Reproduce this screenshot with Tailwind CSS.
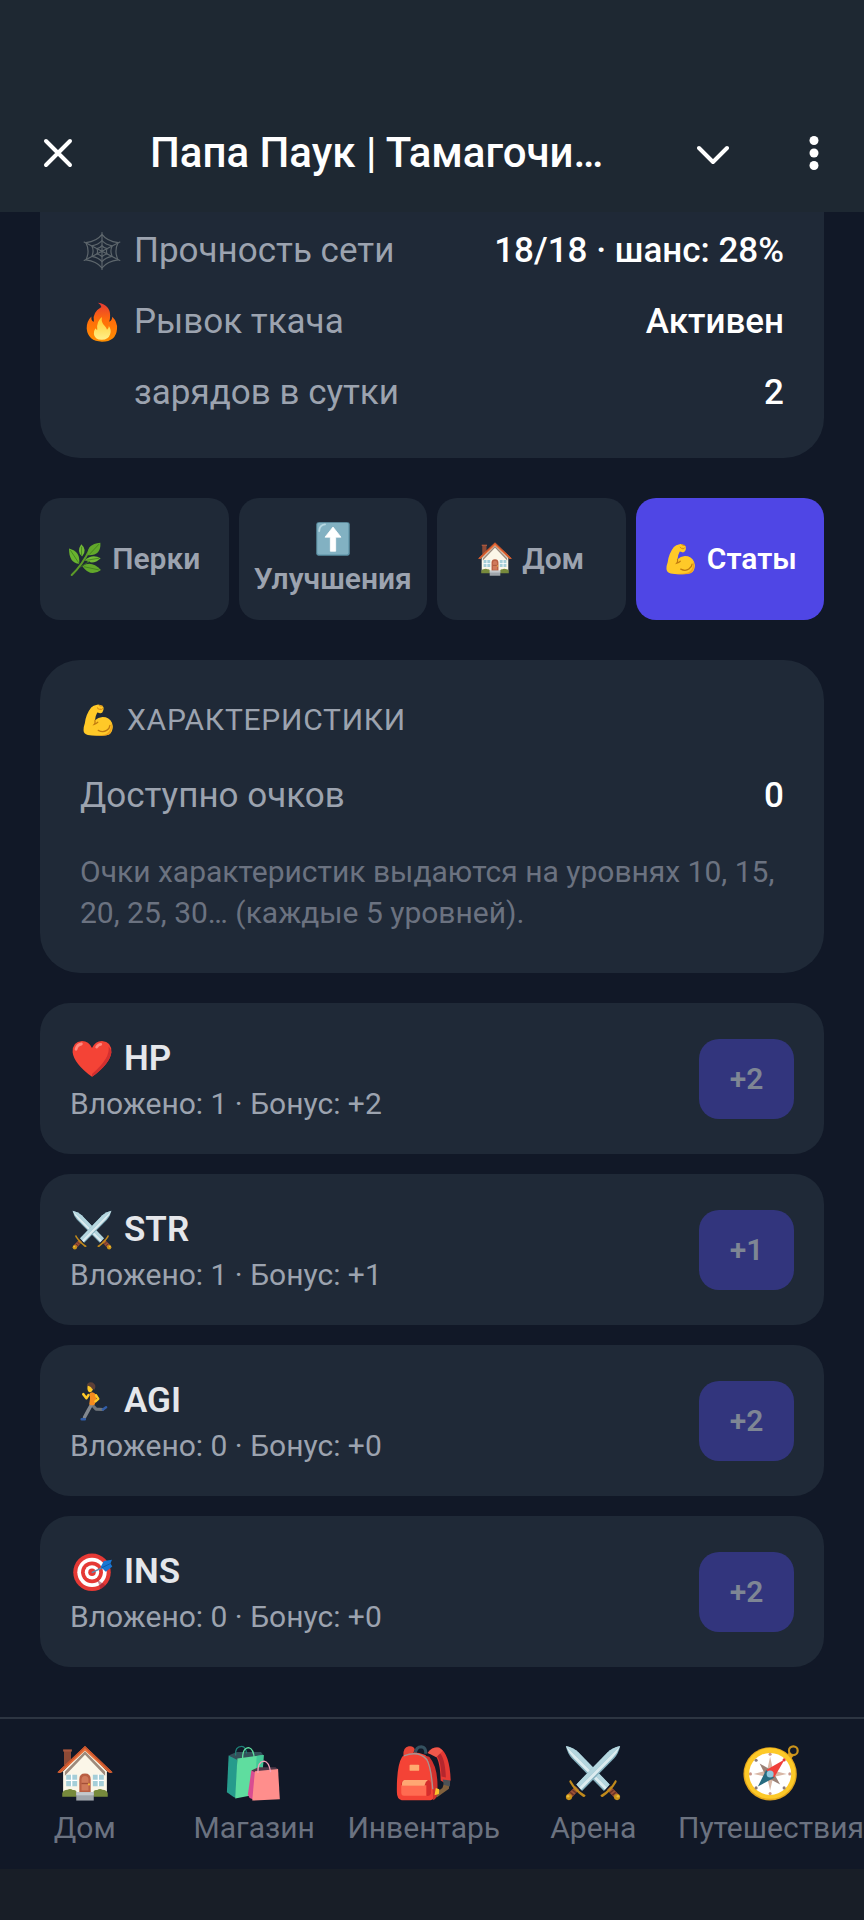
<!DOCTYPE html>
<html lang="ru">
<head>
<meta charset="utf-8">
<meta name="viewport" content="width=device-width, initial-scale=1">
<title>Папа Паук | Тамагочи</title>
<script src="https://cdn.jsdelivr.net/npm/@tailwindcss/browser@4"></script>
</head>
<body class="flex min-h-screen flex-col bg-[#111827] font-['Roboto',sans-serif] text-gray-200">

<svg class="hidden" aria-hidden="true">
  <symbol id="house" viewBox="0 0 128 128">
    <path d="M16 12h16v34H16z" fill="#8d4a36"/><path d="M14 10h20v5H14z" fill="#a8563d"/>
    <path d="M64 8 14 60v50h100V60z" fill="#fbf6e8"/>
    <path d="M64 14 18 61v9l46-48 46 48v-9z" fill="#9c8a7c"/>
    <path d="M64 2 1 62q4 3 9 1L64 13l54 50q5 2 9-1z" fill="#e8703a"/>
    <path d="M64 2 1 62l5 1L64 7l58 56 5-1z" fill="#c9542c"/>
    <path d="M21 68h25v26H21zM82 68h25v26H82z" fill="#a5ced8"/>
    <path d="M33.500 67v28M20 81h27M94.500 67v28M81 81h27" stroke="#fff" stroke-width="3"/>
    <path d="M51 108V78q0-13 13-13t13 13v30z" fill="#b95f43"/>
    <path d="M56 104V80q0-9 8-9t8 9v24z" fill="#d07a5b"/><path d="M56 88h16" stroke="#a34f37" stroke-width="3"/>
    <circle cx="73" cy="90" r="2.500" fill="#f4b93c"/>
    <path d="M12 118v-8q2-8 12-8 7-3 12 1 8-2 9 6v9zM83 118v-9q1-8 9-6 5-4 12-1 10 0 12 8v8z" fill="#778a3c"/>
    <path d="M44 108h40v19H44z" fill="#9fa5ab"/><path d="M44 108h40v7H44z" fill="#c3c8cc"/>
  </symbol>
  <symbol id="biceps" viewBox="-10 -4 138 134">
    <path d="M54 4q7-4 15 0 14 4 14 12 1 10-5 17-5 5-12 2l-8-2q-8 14-9 31 12-12 30-13 27 0 37 23 9 24-6 42-8 7-28 8-38 3-61-2-17-5-17-19 0-14 5-27 4-35 25-62Q44 5 54 4z" fill="#ffc928"/>
    <path d="M49 64q2 10-3 16 8-2 14-8M62 104q18 10 33 0 12-8 13-20" fill="none" stroke="#c07a10" stroke-width="5" stroke-linecap="round"/>
    <path d="M59 15q3 8 12 5M66 5q5 4 12 3M71 22q6 0 8-5" fill="none" stroke="#d98a14" stroke-width="4" stroke-linecap="round"/>
    <path d="M111 70q14 28-6 50-11 5-30 5-20 1-35-1 44 0 56-8 20-14 15-46z" fill="#f2a31c"/>
  </symbol>
  <symbol id="swords" viewBox="0 0 128 128">
    <g id="sword">
      <path d="M2 2q18 4 29 15l71 73-13 15L16 31Q5 18 2 2z" fill="#86b2c0"/>
      <path d="M2 2q18 4 29 15l71 73-6 7z" fill="#b4d6df"/>
      <path d="m2 2 94 95-5 5L20 30Q8 18 2 2z" fill="#dcecf0"/>
      <path d="m96 102 8-8 19 19-9 9z" fill="#9b5037"/>
      <path d="m103 109 8-6M108 115l8-7" stroke="#693225" stroke-width="3"/>
      <path d="M115 80q5 2 2 6-11 19-30 32-5 2-6-3 22-13 34-35z" fill="#c18a1b"/>
      <circle cx="119" cy="119" r="7" fill="#c99218"/><circle cx="121" cy="117" r="3" fill="#eabd3d"/>
    </g>
    <use href="#sword" transform="translate(128 0) scale(-1 1)"/>
  </symbol>
</svg>

<header class="bg-[#1e2832] pt-[94px]">
  <div class="flex h-[118px] items-center px-10">
    <button type="button" aria-label="Закрыть" class="shrink-0">
      <svg class="h-9 w-9" viewBox="0 0 36 36" fill="none" stroke="#fff" stroke-width="4" stroke-linecap="round"><path d="M6 6l24 24M30 6L6 30"/></svg>
    </button>
    <h1 class="ml-[74px] min-w-0 flex-1 truncate text-[42px] leading-[60px] font-medium text-white">Папа Паук | Тамагочи…</h1>
    <button type="button" aria-label="Свернуть" class="shrink-0">
      <svg class="h-8 w-8" viewBox="0 0 32 32" fill="none" stroke="#fff" stroke-width="4" stroke-linecap="round" stroke-linejoin="round"><path d="M2 11l14 14 14-14"/></svg>
    </button>
    <button type="button" aria-label="Меню" class="ml-[75px] shrink-0">
      <svg class="h-9 w-5" viewBox="0 0 20 36" fill="#fff"><circle cx="10" cy="5.500" r="4.500"/><circle cx="10" cy="18" r="4.500"/><circle cx="10" cy="30.500" r="4.500"/></svg>
    </button>
  </div>
</header>

<main class="flex-1 px-10 pb-[50px]">
  <section class="flex flex-col gap-5 rounded-b-[40px] bg-[#1f2937] px-10 pt-[13px] pb-10 text-[35px] leading-[51px]">
    <div class="flex items-center justify-between">
      <span class="flex items-center gap-[10px] text-[#9ca3af]">
        <svg class="h-[38px] w-[44px]" viewBox="0 0 128 128" fill="none" stroke="#5d666c" stroke-width="4" stroke-linejoin="round" stroke-linecap="round">
          <path d="M64 2v124M4 34l120 62M124 34 4 96"/>
          <path d="M64 8Q81 31 118 36 104 64 118 94 83 98 64 121 45 98 10 94 24 64 10 36 47 31 64 8z"/>
          <path d="M64 29q12 13 34 18-8 17 0 35-22 4-34 18-12-14-34-18 8-18 0-35 22-5 34-18z"/>
          <path d="M64 46q6 8 17 10-4 9 0 18-11 2-17 9-6-7-17-9 4-9 0-18 11-2 17-10z"/>
        </svg>Прочность сети</span>
      <span class="font-medium text-white">18/18 · шанс: 28%</span>
    </div>
    <div class="flex items-center justify-between">
      <span class="flex items-center gap-[10px] text-[#9ca3af]">
        <svg class="h-10 w-[44px]" viewBox="0 0 128 128">
          <defs><linearGradient id="flame" x1="0" y1="0" x2="0" y2="1"><stop offset="0" stop-color="#e53935"/><stop offset=".45" stop-color="#ff6d0a"/><stop offset="1" stop-color="#ff8f00"/></linearGradient>
          <linearGradient id="core" x1="0" y1="0" x2="0" y2="1"><stop offset="0" stop-color="#ffc928"/><stop offset="1" stop-color="#fff08a"/></linearGradient></defs>
          <path d="M51 2q39 6 39 41 0 11-3 20 9-3 10-16 17 17 15 39-3 40-48 41-45-1-49-42-1-23 15-39-1 16 8 17Q31 34 62 16 61 7 51 2z" fill="url(#flame)"/>
          <path d="M64 48q-4 17 9 29 6 7 7 12 6-5 6-12 9 12 4 26-5 17-27 18-23-1-25-19-1-9 5-18 2 5 6 5-4-27 15-41z" fill="url(#core)"/>
        </svg>Рывок ткача</span>
      <span class="font-medium text-white">Активен</span>
    </div>
    <div class="flex items-center justify-between">
      <span class="pl-[54px] text-[#9ca3af]">зарядов в сутки</span>
      <span class="font-medium text-white">2</span>
    </div>
  </section>

  <div class="mt-10 grid grid-cols-4 gap-[10px] text-[30px] leading-10 font-semibold text-[#9ca3af]">
    <button type="button" class="flex h-[122px] items-center justify-center gap-[10px] rounded-[20px] bg-[#1f2937]">
      <svg class="h-10 w-[34px]" viewBox="0 0 128 128">
        <path d="M14 124Q54 87 84 24" fill="none" stroke="#5c9a28" stroke-width="8" stroke-linecap="round"/>
        <path d="M76 50Q68 8 122 3q3 49-46 47z" fill="#62a82b"/>
        <path d="M53 55Q31 35 50 8q24 21 3 47z" fill="#72b936"/>
        <path d="M42 82Q3 78 4 24q44 11 38 58z" fill="#69b32f"/>
        <path d="M63 69q28-26 60-8-27 27-60 8z" fill="#72b936"/>
        <path d="M54 91q34-23 70 14-39 30-70-14z" fill="#62a82b"/>
        <path d="M80 47 117 8M51 51V18M40 78 9 31M68 69l49-8M60 93l56 12M43 96l40-24" fill="none" stroke="#3d7f1c" stroke-width="3"/>
      </svg>Перки</button>
    <button type="button" class="flex h-[122px] flex-col items-center justify-center rounded-[20px] bg-[#1f2937]">
      <svg class="h-10 w-[34px]" viewBox="0 0 128 128"><rect x="1" y="1" width="126" height="126" rx="8" fill="#5d93a7"/><rect x="5" y="3" width="117" height="119" rx="7" fill="#82b1c2"/><path d="M12 34Q13 12 34 9" fill="none" stroke="#b7d8e2" stroke-width="7" stroke-linecap="round"/><path d="M64 19 94 57H74v53H54V57H34z" fill="#fff" stroke="#fff" stroke-width="3" stroke-linejoin="round"/></svg>
      <span>Улучшения</span></button>
    <button type="button" class="flex h-[122px] items-center justify-center gap-[10px] rounded-[20px] bg-[#1f2937]">
      <svg class="h-10 w-[34px]"><use href="#house"/></svg>Дом</button>
    <button type="button" class="flex h-[122px] items-center justify-center gap-[10px] rounded-[20px] bg-[#4f46e5] text-white">
      <svg class="h-10 w-[34px]"><use href="#biceps"/></svg>Статы</button>
  </div>

  <section class="mt-10 rounded-[40px] bg-[#1f2937] p-10">
    <h2 class="flex items-center gap-3 text-[30px] leading-10 tracking-wide text-[#9ca3af]"><svg class="h-10 w-[35px]"><use href="#biceps"/></svg>ХАРАКТЕРИСТИКИ</h2>
    <div class="mt-[30px] flex items-center justify-between text-[35px] leading-[51px]">
      <span class="text-[#9ca3af]">Доступно очков</span><span class="font-medium text-white">0</span>
    </div>
    <p class="mt-[30px] text-[30px] leading-[41px] text-[#6b7280]">Очки характеристик выдаются на уровнях 10, 15, 20, 25, 30… (каждые 5 уровней).</p>
  </section>

  <ul class="mt-[30px] flex flex-col gap-5">
    <li class="flex items-center justify-between rounded-[30px] bg-[#1f2937] p-[30px]">
      <div>
        <h3 class="flex items-center gap-[10px] text-[35px] leading-[51px] font-semibold text-gray-200">
          <svg class="h-10 w-[44px]" viewBox="0 0 128 128"><path d="M64 121Q6 78 2 42 1 8 32 6q22 0 32 23Q74 6 96 6q31 2 30 36-4 36-62 79z" fill="#f44336"/><path d="M117 24q7 36-53 88v9q58-43 62-79 0-9-9-18z" fill="#d32f2f"/><path d="M13 33q3-15 17-17M79 26q5-9 13-9" fill="none" stroke="#ff8a80" stroke-width="9" stroke-linecap="round"/></svg>HP</h3>
        <p class="text-[30px] leading-10 text-[#9ca3af]">Вложено: 1 · Бонус: +2</p>
      </div>
      <button type="button" disabled class="h-20 w-[95px] rounded-[20px] bg-[#32357d] text-[30px] font-semibold text-[#7e8694]">+2</button>
    </li>
    <li class="flex items-center justify-between rounded-[30px] bg-[#1f2937] p-[30px]">
      <div>
        <h3 class="flex items-center gap-[10px] text-[35px] leading-[51px] font-semibold text-gray-200">
          <svg class="h-10 w-[44px]"><use href="#swords"/></svg>STR</h3>
        <p class="text-[30px] leading-10 text-[#9ca3af]">Вложено: 1 · Бонус: +1</p>
      </div>
      <button type="button" disabled class="h-20 w-[95px] rounded-[20px] bg-[#32357d] text-[30px] font-semibold text-[#7e8694]">+1</button>
    </li>
    <li class="flex items-center justify-between rounded-[30px] bg-[#1f2937] p-[30px]">
      <div>
        <h3 class="flex items-center gap-[10px] text-[35px] leading-[51px] font-semibold text-gray-200">
          <svg class="h-10 w-[44px]" viewBox="0 0 128 128" fill="none" stroke-linecap="round" stroke-linejoin="round">
            <path d="m64 76 13 14 21 1" stroke="#6f757b" stroke-width="10"/><path d="M62 76 52 94l-12 22" stroke="#82888e" stroke-width="11"/>
            <path d="m99 91 10-7M31 122h10" stroke="#315da8" stroke-width="8"/>
            <path d="m53 45-7 10-10-13" stroke="#ffc928" stroke-width="8"/>
            <path d="M57 38q12-6 20 6 2 13-4 31-11 6-18-1 4-15 2-36z" fill="#f68b1f"/>
            <path d="m77 46 7 11-9 8" stroke="#ffc928" stroke-width="8"/>
            <path d="M50 14q12-8 18 6-1 16-12 16-9-3-6-22z" fill="#ffc928"/>
            <path d="M47 14Q52 0 66 5q14 8 6 23l-8-3q-2-9-17-11z" fill="#5d4037"/>
          </svg>AGI</h3>
        <p class="text-[30px] leading-10 text-[#9ca3af]">Вложено: 0 · Бонус: +0</p>
      </div>
      <button type="button" disabled class="h-20 w-[95px] rounded-[20px] bg-[#32357d] text-[30px] font-semibold text-[#7e8694]">+2</button>
    </li>
    <li class="flex items-center justify-between rounded-[30px] bg-[#1f2937] p-[30px]">
      <div>
        <h3 class="flex items-center gap-[10px] text-[35px] leading-[51px] font-semibold text-gray-200">
          <svg class="h-10 w-[44px]" viewBox="0 0 128 128"><circle cx="64" cy="65" r="60" fill="#e53935"/><circle cx="64" cy="65" r="47" fill="#fff"/><circle cx="64" cy="65" r="35" fill="#e53935"/><circle cx="64" cy="65" r="23" fill="#fff"/><circle cx="64" cy="65" r="12" fill="#e53935"/><path d="m80 88 28 19-16 12z" fill="#8e1b34" opacity=".5"/><path d="m63 66 48-22" stroke="#5a8fb5" stroke-width="5"/><path d="m92 47 10-18 26-4-5 12 6 9-21 17z" fill="#1976d2"/><path d="m94 51 29-14" stroke="#0d5aa7" stroke-width="3"/></svg>INS</h3>
        <p class="text-[30px] leading-10 text-[#9ca3af]">Вложено: 0 · Бонус: +0</p>
      </div>
      <button type="button" disabled class="h-20 w-[95px] rounded-[20px] bg-[#32357d] text-[30px] font-semibold text-[#7e8694]">+2</button>
    </li>
  </ul>
</main>

<nav class="flex border-t-2 border-[#2d3542] bg-[#111827] pt-[25px] pb-[21px] text-[30px] leading-10 text-[#6b7280]">
  <a href="#home" class="flex flex-1 flex-col items-center gap-[6px]"><svg class="h-[58px] w-[56px]"><use href="#house"/></svg>Дом</a>
  <a href="#shop" class="flex flex-1 flex-col items-center gap-[6px]">
    <svg class="h-[58px] w-[56px]" viewBox="0 0 128 128"><path d="M6 24 26 30v88l-7 2-17-12z" fill="#269b8c"/><path d="M6 24 24 16h56l6 8-60 10z" fill="#34505a"/><path d="M26 31l60-8-5 88-60 11z" fill="#5fdd9f"/><path d="M70 25l16-2-5 88-15 3z" fill="#43c998"/><path d="M22 24q-2-21 14-21 9 0 11 16" fill="none" stroke="#1f8178" stroke-width="3"/><path d="M38 35q-1-29 14-29 11 2 13 27" fill="none" stroke="#5fdd9f" stroke-width="3"/><path d="M58 58 67 60l-3 65-10-4-4-8z" fill="#d94c91"/><path d="M58 58l16-7h39l6 4-52 8z" fill="#513849"/><path d="M66 60l53-5 4 69-63 3z" fill="#ff8e8c"/><path d="M73 64q-1-26 14-27 11 1 15 25" fill="none" stroke="#f6a1ba" stroke-width="3"/></svg>Магазин</a>
  <a href="#inventory" class="flex flex-1 flex-col items-center gap-[6px]">
    <svg class="h-[58px] w-[56px]" viewBox="0 0 128 128"><path d="M17 24Q16 5 29 3q12-2 14 8l-9 17z" fill="#e94638"/><path d="M44 19Q46 4 58 4q11 1 10 16" fill="none" stroke="#34505f" stroke-width="7"/><path d="M72 18Q82 3 99 6q24 13 26 75l-13 6-10-6q-1-48-14-59z" fill="#e63a34"/><path d="M89 22q13 4 15 50l10 2Q112 28 99 17z" fill="#b5262d"/><path d="M73 18Q84 3 99 6l8 7-15 15z" fill="#f1584b"/><path d="m111 84 11 3-1 13-28 20-6-8 19-14z" fill="#81613d"/><path d="M107 79l17 2-1 14-14-4z" fill="#4c5155"/><path d="M2 108Q1 48 14 27q20-17 53-4 18 15 22 83 0 18-10 20H13q-11-2-11-18z" fill="#f44336"/><path d="M65 24q18 12 20 102 6-2 9-12 5-60-18-87z" fill="#d1322e"/><path d="M18 25q33-13 52 8 10 16 14 68" fill="none" stroke="#a69391" stroke-width="3"/><rect x="31" y="45" width="22" height="14" rx="2" fill="#ffab70"/><path d="M12 91h57v25H18q-6 0-6-8z" fill="#ff6b51"/><path d="M18 80h55q8 2 7 13v18q-2 7-10 5V92H12q0-10 6-12z" fill="#d52e2d"/><path d="M19 80h54q-7 4-8 13H14q-2-10 5-13z" fill="#ffa773"/><path d="m91 98 8 3-1 11-10 3z" fill="#fbc02d"/></svg>Инвентарь</a>
  <a href="#arena" class="flex flex-1 flex-col items-center gap-[6px]"><svg class="h-[58px] w-[56px]"><use href="#swords"/></svg>Арена</a>
  <a href="#travel" class="flex flex-1 flex-col items-center gap-[6px]">
    <svg class="h-[58px] w-[56px]" viewBox="0 0 128 128"><circle cx="115" cy="13" r="10" fill="none" stroke="#c9921b" stroke-width="5"/><path d="m100 22 7-6 8 9-5 7z" fill="#d99d1e"/><circle cx="62" cy="66" r="61" fill="#e3a51b"/><circle cx="62" cy="65" r="58" fill="#fdc928"/><circle cx="62" cy="66" r="48" fill="#fff"/><path d="m62 27 7 31 31 8-31 7-7 31-7-31-31-7 31-8z" fill="#d8b7a6"/><path d="m38 42 29 17 18 31-31-16z" fill="#9a8176"/><path d="M95 33 71 75 53 57z" fill="#f0403b"/><path d="m34 95 19-38 18 18z" fill="#276b80"/><circle cx="62" cy="66" r="8" fill="#8fc7dc"/><g fill="#c9968a"><circle cx="62" cy="21" r="3.500"/><circle cx="62" cy="111" r="3.500"/><circle cx="17" cy="66" r="3.500"/><circle cx="107" cy="66" r="3.500"/></g><g fill="#8a7a78"><circle cx="30" cy="35" r="3.500"/><circle cx="94" cy="98" r="3.500"/><circle cx="30" cy="98" r="3.500"/></g><circle cx="94" cy="34" r="3.500" fill="#e53935"/></svg>Путешествия</a>
</nav>
<div class="h-[51px] bg-[#181e27]"></div>
</body>
</html>
